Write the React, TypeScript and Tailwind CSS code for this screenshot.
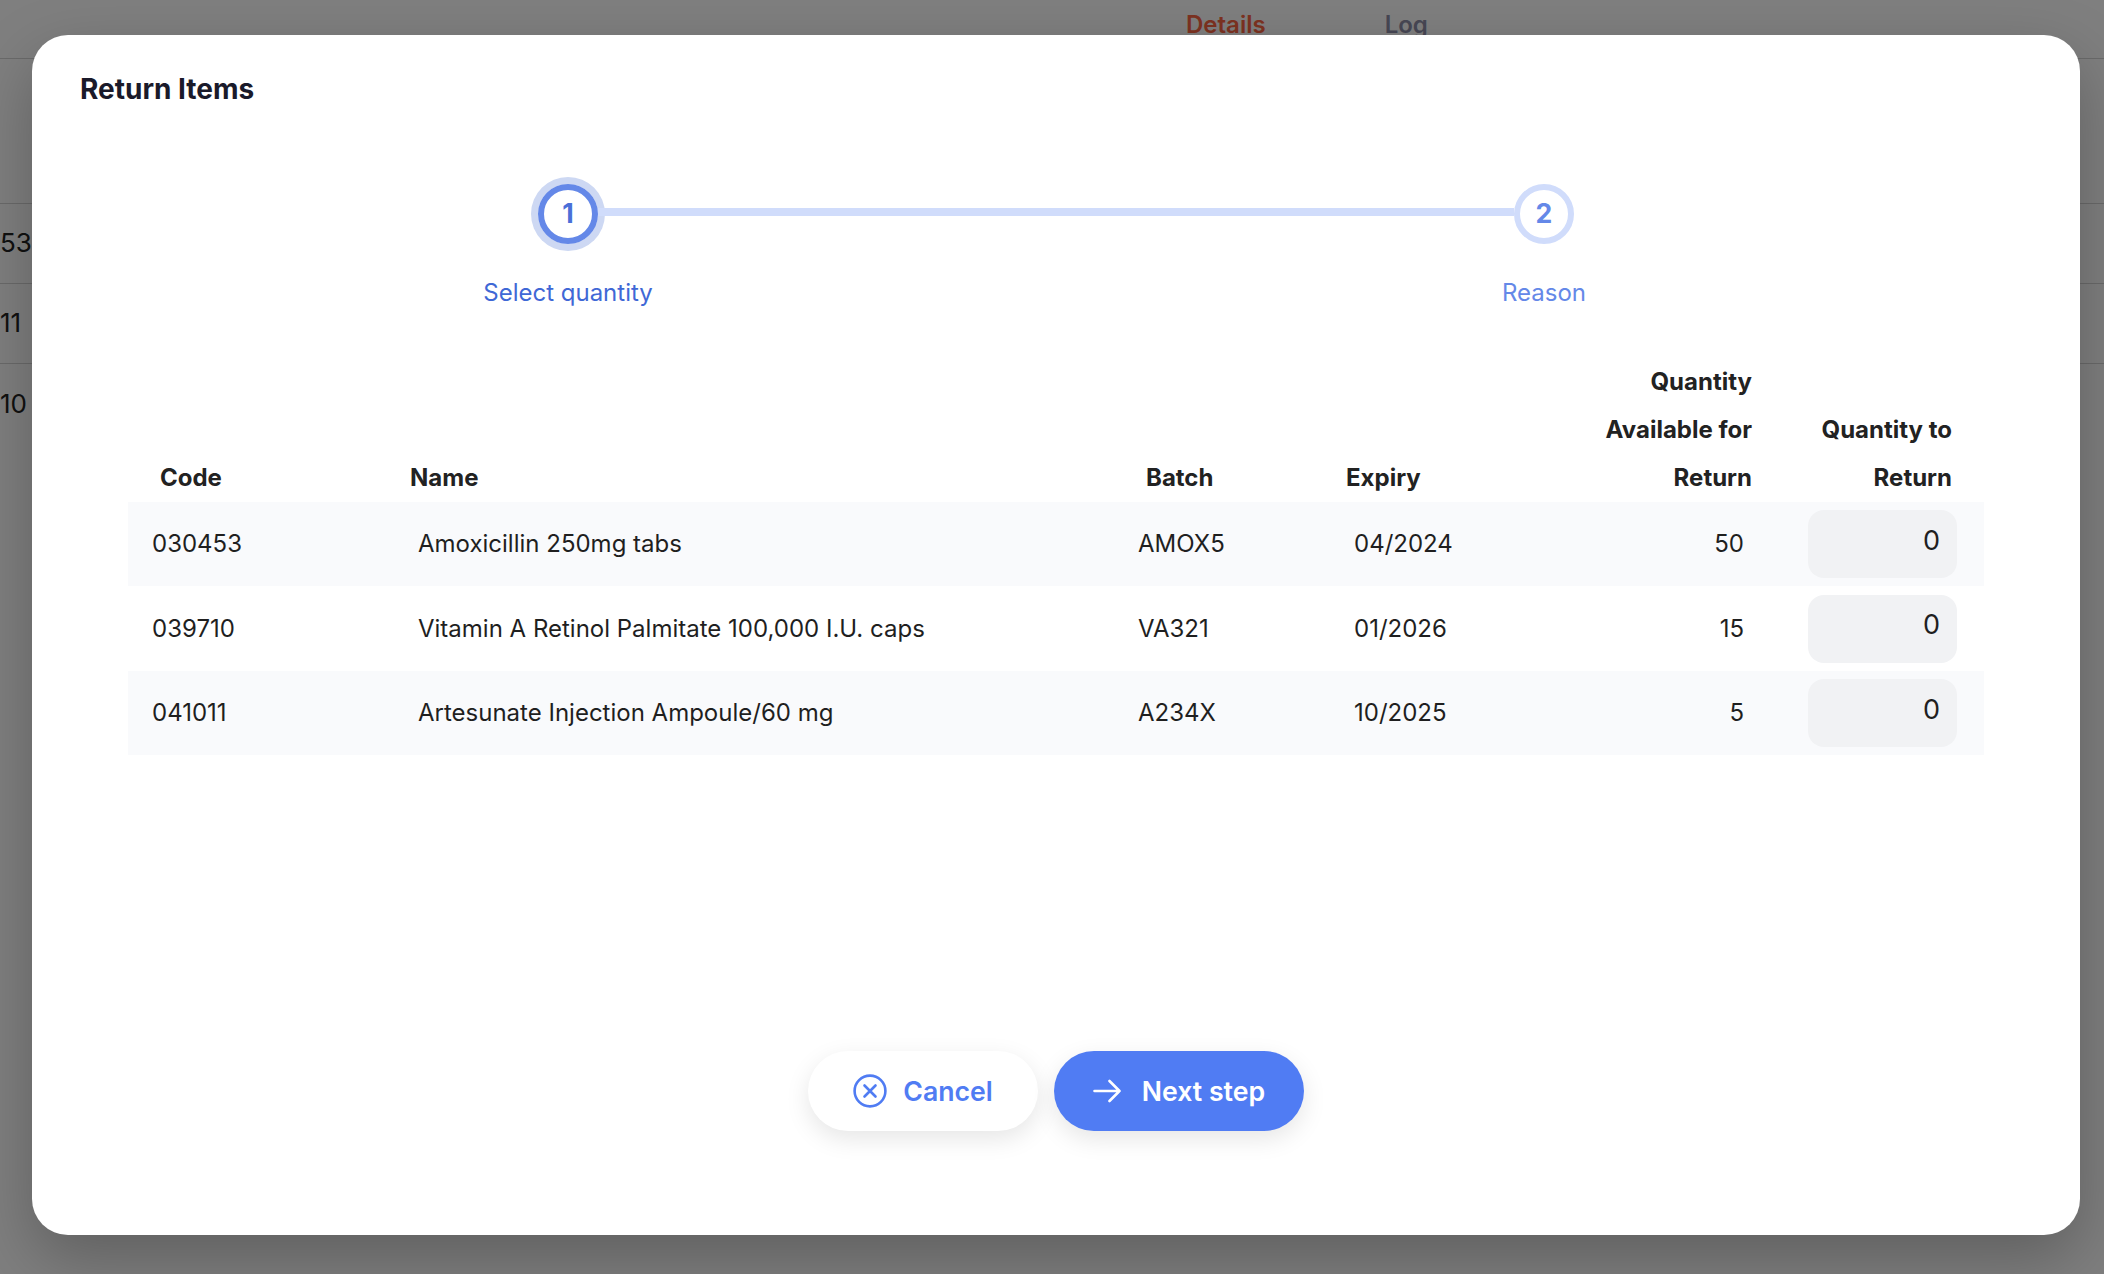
import { useState } from 'react';

type Item = {
  code: string;
  name: string;
  batch: string;
  expiry: string;
  available: number;
};

const items: Item[] = [
  { code: '030453', name: 'Amoxicillin 250mg tabs', batch: 'AMOX5', expiry: '04/2024', available: 50 },
  { code: '039710', name: 'Vitamin A Retinol Palmitate 100,000 I.U. caps', batch: 'VA321', expiry: '01/2026', available: 15 },
  { code: '041011', name: 'Artesunate Injection Ampoule/60 mg', batch: 'A234X', expiry: '10/2025', available: 5 },
];

function BackgroundPage() {
  return (
    <div className="h-[1274px] overflow-hidden bg-white text-[#222222]">
      <div className="flex h-[59px] gap-[119px] border-b border-b-[#d4d4d4] pl-[1186px] pt-[7px] text-[24px] font-semibold">
        <span className="text-[#fb6542]">Details</span>
        <span className="text-[#8e8ea8]">Log</span>
      </div>
      <div className="mt-[144px] border-t border-t-[#d4d4d4]">
        {['53', '11', '10'].map((tail) => (
          <div
            key={tail}
            className="flex h-[80px] items-center border-b border-b-[#d4d4d4] pb-[2px] text-[26px] last:border-b-0"
          >
            {tail}
          </div>
        ))}
      </div>
    </div>
  );
}

function Stepper() {
  return (
    <div className="mt-[77px] flex flex-col items-center">
      <div className="flex w-[1036px] items-start">
        <div className="flex h-[60px] w-[60px] shrink-0 items-center justify-center rounded-full border-[6px] border-[#6488e8] pb-[2px] text-[26.67px] font-bold text-[#4a6fd8] shadow-[0_0_0_7px_#cdd8f3]">
          1
        </div>
        <div className="mt-[24px] h-[8px] flex-1 bg-[#d0dcfb]" />
        <div className="flex h-[60px] w-[60px] shrink-0 items-center justify-center rounded-full border-[6px] border-[#d0dcfb] pb-[2px] text-[26.67px] font-bold text-[#6488e8]">
          2
        </div>
      </div>
      <div className="mt-[33px] flex w-[1176px] justify-between text-center text-[24px] leading-[32px]">
        <span className="w-[200px] text-[#3f68d6]">Select quantity</span>
        <span className="w-[200px] text-[#6488e8]">Reason</span>
      </div>
    </div>
  );
}

function ItemsTable() {
  const [quantities, setQuantities] = useState<string[]>(items.map(() => '0'));

  return (
    <table className="mx-[96px] mt-[49px] w-[1856px] table-fixed border-collapse text-[24px] text-[#1f1f1f]">
      <colgroup>
        <col className="w-[267px]" />
        <col className="w-[719px]" />
        <col className="w-[216px]" />
        <col className="w-[240px]" />
        <col className="w-[205px]" />
        <col className="w-[209px]" />
      </colgroup>
      <thead>
        <tr className="align-bottom text-[24px] leading-[48px] text-[#222222]">
          <th className="pl-[32px] text-left font-bold">Code</th>
          <th className="pl-[15px] text-left font-bold">Name</th>
          <th className="pl-[32px] text-left font-bold">Batch</th>
          <th className="pl-[16px] text-left font-bold">Expiry</th>
          <th className="pr-[23px] text-right font-bold">Quantity Available for Return</th>
          <th className="pl-[24px] pr-[32px] text-right font-bold">Quantity to Return</th>
        </tr>
      </thead>
      <tbody>
        {items.map((item, i) => (
          <tr key={item.code} className={i % 2 === 0 ? 'h-[84px] bg-[#f9fafc]' : 'h-[85px] bg-white'}>
            <td className="pl-[24px]">{item.code}</td>
            <td className="pl-[23px]">{item.name}</td>
            <td className="pl-[24px]">{item.batch}</td>
            <td className="pl-[24px]">{item.expiry}</td>
            <td className="pr-[31px] text-right">{item.available}</td>
            <td className="pr-[27px]">
              <input
                type="text"
                value={quantities[i]}
                onChange={(e) => setQuantities(quantities.map((q, j) => (j === i ? e.target.value : q)))}
                className="ml-auto block h-[68px] w-[149px] rounded-[16px] bg-[#f1f2f4] pb-[8px] pr-[17px] text-right text-[27px] text-[#1f1f1f] outline-none"
              />
            </td>
          </tr>
        ))}
      </tbody>
    </table>
  );
}

export default function App() {
  return (
    <div className="relative h-[1274px] w-[2104px] overflow-hidden font-['Inter',sans-serif]">
      <BackgroundPage />
      <div className="absolute inset-0 bg-black/50 pl-[32px] pt-[35px]">
        <div className="flex h-[1200px] w-[2048px] flex-col rounded-[36px] bg-white pb-[104px] shadow-[0_24px_64px_rgba(0,0,0,0.25)]">
          <h2 className="ml-[48px] mt-[36px] text-[28px] font-bold leading-[36px] text-[#1a1a2a]">
            Return Items
          </h2>
          <Stepper />
          <ItemsTable />
          <div className="mt-auto flex justify-center gap-[16px] text-[26.67px] font-semibold">
            <button
              type="button"
              className="flex h-[80px] w-[230px] items-center justify-center gap-[16px] rounded-full bg-white text-[#507cf3] shadow-[0_8px_24px_rgba(0,0,0,0.1)]"
            >
              <svg width="34" height="34" viewBox="0 0 34 34" fill="none" stroke="currentColor" strokeWidth="2.6" strokeLinecap="round">
                <circle cx="17" cy="17" r="15.4" />
                <path d="M11.5 11.5l11 11M22.5 11.5l-11 11" />
              </svg>
              Cancel
            </button>
            <button
              type="button"
              className="flex h-[80px] w-[250px] items-center justify-center gap-[21px] rounded-full bg-[#507cf3] text-white shadow-[0_8px_24px_rgba(0,0,0,0.1)]"
            >
              <svg width="28" height="24" viewBox="0 0 28 24" fill="none" stroke="currentColor" strokeWidth="2.6" strokeLinecap="round" strokeLinejoin="round">
                <path d="M1.5 12h25M16.5 2l10 10-10 10" />
              </svg>
              Next step
            </button>
          </div>
        </div>
      </div>
    </div>
  );
}
